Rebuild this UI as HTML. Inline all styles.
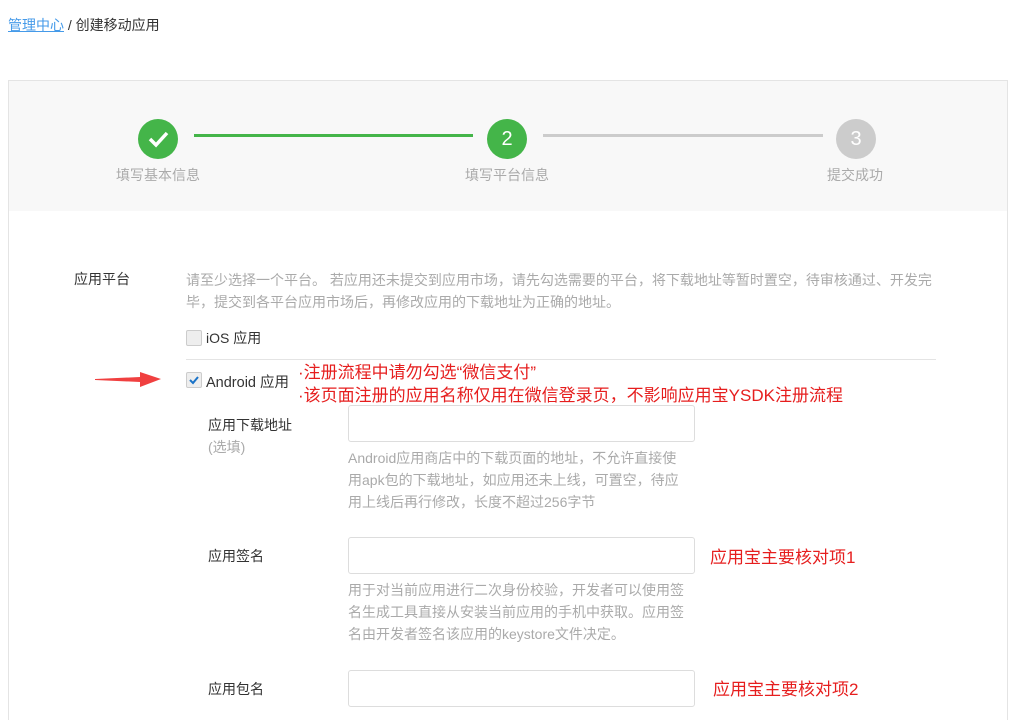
<!DOCTYPE html>
<html><head><meta charset="utf-8"><style>
*{margin:0;padding:0;box-sizing:border-box}
body{width:1015px;height:713px;overflow:hidden;background:#fff;font-family:"Liberation Sans","Noto Sans CJK SC",sans-serif;font-size:14px;color:#333;position:relative}
.a{position:absolute;white-space:nowrap}
.g{color:#aaa}
.r{color:#e61e1e;font-size:17px}
.inp{position:absolute;left:348px;width:347px;height:37px;border:1px solid #ddd;border-radius:3px;background:#fff}
.c{position:absolute;width:40px;height:40px;border-radius:50%;color:#fff;font-size:20px;text-align:center;line-height:40px}
</style></head><body>
<div class="a" style="left:8px;top:15px"><span style="color:#459ae9;text-decoration:underline">管理中心</span> / 创建移动应用</div>
<div style="position:absolute;left:8px;top:80px;width:1000px;height:640px;border:1px solid #e4e4e4;border-bottom:none"></div>
<div style="position:absolute;left:9px;top:81px;width:998px;height:130px;background:#f8f8f8"></div>
<div style="position:absolute;left:194px;top:134px;width:279px;height:3px;background:#44b549"></div>
<div style="position:absolute;left:543px;top:134px;width:280px;height:3px;background:#ccc"></div>
<div class="c" style="left:138px;top:119px;background:#44b549"><svg width="40" height="40" viewBox="0 0 40 40" style="position:absolute;left:0;top:0"><path d="M12 20l6 6 11-12" fill="none" stroke="#fff" stroke-width="3.5"/></svg></div>
<div class="c" style="left:487px;top:119px;background:#44b549">2</div>
<div class="c" style="left:836px;top:119px;background:#ccc">3</div>
<div class="a g" style="left:116px;top:165px">填写基本信息</div>
<div class="a g" style="left:465px;top:165px">填写平台信息</div>
<div class="a g" style="left:827px;top:165px">提交成功</div>
<div class="a" style="left:74px;top:269px">应用平台</div>
<div class="a g" style="left:186px;top:269px;line-height:22px">请至少选择一个平台。 若应用还未提交到应用市场，请先勾选需要的平台，将下载地址等暂时置空，待审核通过、开发完<br>毕，提交到各平台应用市场后，再修改应用的下载地址为正确的地址。</div>
<div style="position:absolute;left:186px;top:330px;width:16px;height:16px;border:1px solid #ccc;border-radius:2px;background:#eee"></div>
<div class="a" style="left:206px;top:328px;font-size:14px">iOS 应用</div>
<div style="position:absolute;left:186px;top:359px;width:750px;height:1px;background:#e4e4e4"></div>
<svg style="position:absolute;left:95px;top:370px" width="70" height="20"><path d="M0 9 L45 7 L45 2 L66 9 L45 17 L45 12 L0 10Z" fill="#f04040"/></svg>
<div style="position:absolute;left:186px;top:372px;width:16px;height:16px;border:1px solid #ccc;border-radius:2px;background:#eee"></div>
<svg style="position:absolute;left:186px;top:372px" width="16" height="16"><path d="M4 8l3 3 5-6" fill="none" stroke="#1a73c8" stroke-width="2"/></svg>
<div class="a" style="left:206px;top:371px;font-size:14.5px">Android 应用</div>
<div class="a r" style="left:298px;top:361px;line-height:23px">·注册流程中请勿勾选“微信支付”<br>·该页面注册的应用名称仅用在微信登录页，不影响应用宝YSDK注册流程</div>
<div class="a" style="left:208px;top:414px;line-height:22px">应用下载地址<br><span class="g">(选填)</span></div>
<div class="inp" style="top:405px"></div>
<div class="a g" style="left:348px;top:447px;line-height:22px">Android应用商店中的下载页面的地址，不允许直接使<br>用apk包的下载地址，如应用还未上线，可置空，待应<br>用上线后再行修改，长度不超过256字节</div>
<div class="a" style="left:208px;top:546px">应用签名</div>
<div class="inp" style="top:537px"></div>
<div class="a r" style="left:710px;top:543px">应用宝主要核对项1</div>
<div class="a g" style="left:348px;top:579px;line-height:22px">用于对当前应用进行二次身份校验，开发者可以使用签<br>名生成工具直接从安装当前应用的手机中获取。应用签<br>名由开发者签名该应用的keystore文件决定。</div>
<div class="a" style="left:208px;top:679px">应用包名</div>
<div class="inp" style="top:670px"></div>
<div class="a r" style="left:713px;top:675px">应用宝主要核对项2</div>
</body></html>
